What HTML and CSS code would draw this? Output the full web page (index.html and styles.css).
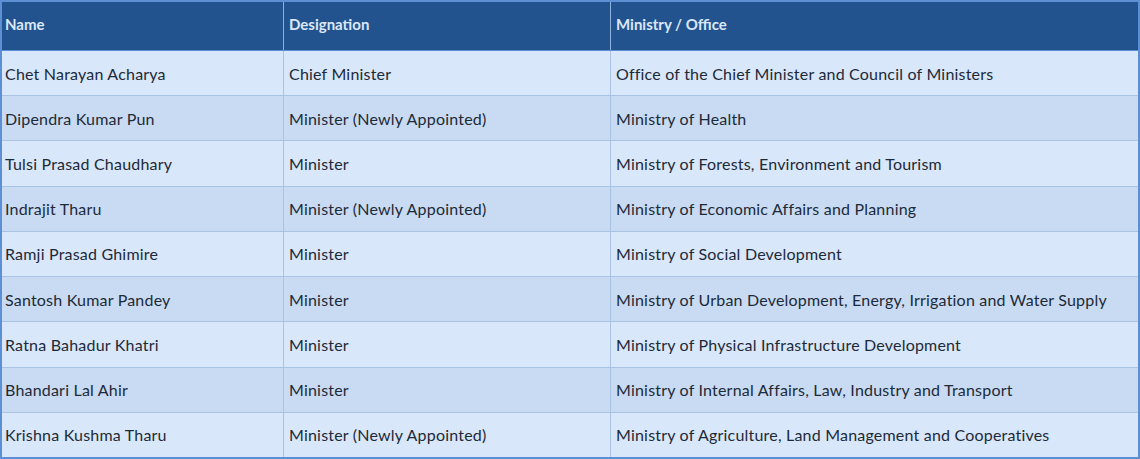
FILE: index.html
```html
<!DOCTYPE html>
<html lang="en">
<head>
<meta charset="utf-8">
<title>Council of Ministers</title>
<link rel="stylesheet" href="styles.css">
</head>
<body>
<table class="ministers">
  <thead>
    <tr><th class="c-name">Name</th><th class="c-desig">Designation</th><th class="c-office">Ministry / Office</th></tr>
  </thead>
  <tbody>
    <tr><td>Chet Narayan Acharya</td><td>Chief Minister</td><td>Office of the Chief Minister and Council of Ministers</td></tr>
    <tr><td>Dipendra Kumar Pun</td><td>Minister (Newly Appointed)</td><td>Ministry of Health</td></tr>
    <tr><td>Tulsi Prasad Chaudhary</td><td>Minister</td><td>Ministry of Forests, Environment and Tourism</td></tr>
    <tr><td>Indrajit Tharu</td><td>Minister (Newly Appointed)</td><td>Ministry of Economic Affairs and Planning</td></tr>
    <tr><td>Ramji Prasad Ghimire</td><td>Minister</td><td>Ministry of Social Development</td></tr>
    <tr><td>Santosh Kumar Pandey</td><td>Minister</td><td>Ministry of Urban Development, Energy, Irrigation and Water Supply</td></tr>
    <tr><td>Ratna Bahadur Khatri</td><td>Minister</td><td>Ministry of Physical Infrastructure Development</td></tr>
    <tr><td>Bhandari Lal Ahir</td><td>Minister</td><td>Ministry of Internal Affairs, Law, Industry and Transport</td></tr>
    <tr><td>Krishna Kushma Tharu</td><td>Minister (Newly Appointed)</td><td>Ministry of Agriculture, Land Management and Cooperatives</td></tr>
  </tbody>
</table>
</body>
</html>
```
FILE: styles.css
```css
html, body {
  margin: 0;
  padding: 0;
  background: #ffffff;
}
body {
  font-family: Lato, "Open Sans", sans-serif;
  font-size: 16px;
  letter-spacing: 0.2px;
  color: #1d2a38;
}
.ministers {
  width: 1140px;
  height: 459px;
  border-collapse: collapse;
  table-layout: fixed;
  border: 2px solid #5d8fd4;
}
.ministers th {
  background: #23538f;
  color: #dbe7f7;
  font-size: 15px;
  font-weight: 700;
  letter-spacing: 0;
  text-align: left;
  height: 44px;
  padding: 0 0 4px 5px;
  border-left: 1px solid #8fb1dd;
  border-bottom: 1px solid #5d8fd4;
}
.ministers th.c-name { width: 278px; border-left: none; padding-left: 3px; }
.ministers th.c-desig { width: 321px; }
.ministers td {
  height: 44px;
  padding: 0 0 0 5px;
  border-left: 1px solid #a9c3e4;
  border-top: 1px solid #a9c3e4;
  background: #d9e7fa;
  white-space: nowrap;
}
.ministers td:first-child { border-left: none; padding-left: 3px; }
.ministers tbody tr:nth-child(even) td { background: #c8dbf3; }
```
